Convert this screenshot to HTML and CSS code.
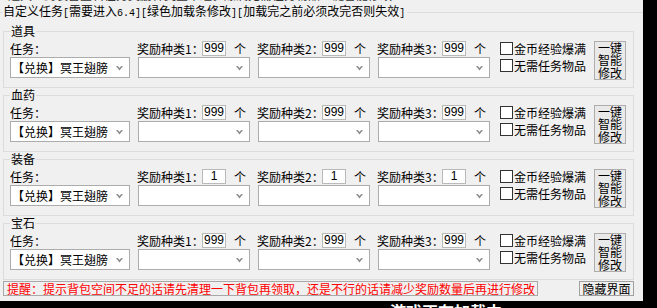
FILE: index.html
```html
<!DOCTYPE html>
<html lang="zh">
<head>
<meta charset="utf-8">
<title>自定义任务</title>
<link rel="stylesheet" href="styles.css">
</head>
<body>
<div class="window">
  <div class="strip"><span>道具血药装备宝石任务奖励种类金币经验爆满无需任务物品一键智能修改</span></div>
  <fieldset class="outer">
    <legend>自定义任务<span class="a">[</span>需要进入<span class="a">6.4]</span><span class="a">[</span>绿色加载条修改<span class="a">]</span><span class="a">[</span>加载完之前必须改完否则失效<span class="a">]</span></legend>

    <fieldset class="group">
      <legend>道具</legend>
      <div class="row">
        <div class="col task">
          <div class="lbl">任务：</div>
          <div class="combo"><span class="txt">【兑换】冥王翅膀</span><svg viewBox="0 0 7 5"><polygon points="0,0 1.8,0 3.5,2 5.2,0 7,0 3.5,4.5" fill="#8a8a8a"/></svg></div>
        </div>
        <div class="col reward">
          <div class="lbl"><span class="name">奖励种类1：</span><span class="num">999</span><span class="ge">个</span></div>
          <div class="combo"><span class="txt"></span><svg viewBox="0 0 7 5"><polygon points="0,0 1.8,0 3.5,2 5.2,0 7,0 3.5,4.5" fill="#8a8a8a"/></svg></div>
        </div>
        <div class="col reward">
          <div class="lbl"><span class="name">奖励种类2：</span><span class="num">999</span><span class="ge">个</span></div>
          <div class="combo"><span class="txt"></span><svg viewBox="0 0 7 5"><polygon points="0,0 1.8,0 3.5,2 5.2,0 7,0 3.5,4.5" fill="#8a8a8a"/></svg></div>
        </div>
        <div class="col reward">
          <div class="lbl"><span class="name">奖励种类3：</span><span class="num">999</span><span class="ge">个</span></div>
          <div class="combo"><span class="txt"></span><svg viewBox="0 0 7 5"><polygon points="0,0 1.8,0 3.5,2 5.2,0 7,0 3.5,4.5" fill="#8a8a8a"/></svg></div>
        </div>
        <div class="checks">
          <div class="chk"><span class="cb"></span>金币经验爆满</div>
          <div class="chk"><span class="cb"></span>无需任务物品</div>
        </div>
        <div class="btn"><span>一键</span><span>智能</span><span>修改</span></div>
      </div>
    </fieldset>

    <fieldset class="group">
      <legend>血药</legend>
      <div class="row">
        <div class="col task">
          <div class="lbl">任务：</div>
          <div class="combo"><span class="txt">【兑换】冥王翅膀</span><svg viewBox="0 0 7 5"><polygon points="0,0 1.8,0 3.5,2 5.2,0 7,0 3.5,4.5" fill="#8a8a8a"/></svg></div>
        </div>
        <div class="col reward">
          <div class="lbl"><span class="name">奖励种类1：</span><span class="num">999</span><span class="ge">个</span></div>
          <div class="combo"><span class="txt"></span><svg viewBox="0 0 7 5"><polygon points="0,0 1.8,0 3.5,2 5.2,0 7,0 3.5,4.5" fill="#8a8a8a"/></svg></div>
        </div>
        <div class="col reward">
          <div class="lbl"><span class="name">奖励种类2：</span><span class="num">999</span><span class="ge">个</span></div>
          <div class="combo"><span class="txt"></span><svg viewBox="0 0 7 5"><polygon points="0,0 1.8,0 3.5,2 5.2,0 7,0 3.5,4.5" fill="#8a8a8a"/></svg></div>
        </div>
        <div class="col reward">
          <div class="lbl"><span class="name">奖励种类3：</span><span class="num">999</span><span class="ge">个</span></div>
          <div class="combo"><span class="txt"></span><svg viewBox="0 0 7 5"><polygon points="0,0 1.8,0 3.5,2 5.2,0 7,0 3.5,4.5" fill="#8a8a8a"/></svg></div>
        </div>
        <div class="checks">
          <div class="chk"><span class="cb"></span>金币经验爆满</div>
          <div class="chk"><span class="cb"></span>无需任务物品</div>
        </div>
        <div class="btn"><span>一键</span><span>智能</span><span>修改</span></div>
      </div>
    </fieldset>

    <fieldset class="group">
      <legend>装备</legend>
      <div class="row">
        <div class="col task">
          <div class="lbl">任务：</div>
          <div class="combo"><span class="txt">【兑换】冥王翅膀</span><svg viewBox="0 0 7 5"><polygon points="0,0 1.8,0 3.5,2 5.2,0 7,0 3.5,4.5" fill="#8a8a8a"/></svg></div>
        </div>
        <div class="col reward">
          <div class="lbl"><span class="name">奖励种类1：</span><span class="num">1</span><span class="ge">个</span></div>
          <div class="combo"><span class="txt"></span><svg viewBox="0 0 7 5"><polygon points="0,0 1.8,0 3.5,2 5.2,0 7,0 3.5,4.5" fill="#8a8a8a"/></svg></div>
        </div>
        <div class="col reward">
          <div class="lbl"><span class="name">奖励种类2：</span><span class="num">1</span><span class="ge">个</span></div>
          <div class="combo"><span class="txt"></span><svg viewBox="0 0 7 5"><polygon points="0,0 1.8,0 3.5,2 5.2,0 7,0 3.5,4.5" fill="#8a8a8a"/></svg></div>
        </div>
        <div class="col reward">
          <div class="lbl"><span class="name">奖励种类3：</span><span class="num">1</span><span class="ge">个</span></div>
          <div class="combo"><span class="txt"></span><svg viewBox="0 0 7 5"><polygon points="0,0 1.8,0 3.5,2 5.2,0 7,0 3.5,4.5" fill="#8a8a8a"/></svg></div>
        </div>
        <div class="checks">
          <div class="chk"><span class="cb"></span>金币经验爆满</div>
          <div class="chk"><span class="cb"></span>无需任务物品</div>
        </div>
        <div class="btn"><span>一键</span><span>智能</span><span>修改</span></div>
      </div>
    </fieldset>

    <fieldset class="group">
      <legend>宝石</legend>
      <div class="row">
        <div class="col task">
          <div class="lbl">任务：</div>
          <div class="combo"><span class="txt">【兑换】冥王翅膀</span><svg viewBox="0 0 7 5"><polygon points="0,0 1.8,0 3.5,2 5.2,0 7,0 3.5,4.5" fill="#8a8a8a"/></svg></div>
        </div>
        <div class="col reward">
          <div class="lbl"><span class="name">奖励种类1：</span><span class="num">999</span><span class="ge">个</span></div>
          <div class="combo"><span class="txt"></span><svg viewBox="0 0 7 5"><polygon points="0,0 1.8,0 3.5,2 5.2,0 7,0 3.5,4.5" fill="#8a8a8a"/></svg></div>
        </div>
        <div class="col reward">
          <div class="lbl"><span class="name">奖励种类2：</span><span class="num">999</span><span class="ge">个</span></div>
          <div class="combo"><span class="txt"></span><svg viewBox="0 0 7 5"><polygon points="0,0 1.8,0 3.5,2 5.2,0 7,0 3.5,4.5" fill="#8a8a8a"/></svg></div>
        </div>
        <div class="col reward">
          <div class="lbl"><span class="name">奖励种类3：</span><span class="num">999</span><span class="ge">个</span></div>
          <div class="combo"><span class="txt"></span><svg viewBox="0 0 7 5"><polygon points="0,0 1.8,0 3.5,2 5.2,0 7,0 3.5,4.5" fill="#8a8a8a"/></svg></div>
        </div>
        <div class="checks">
          <div class="chk"><span class="cb"></span>金币经验爆满</div>
          <div class="chk"><span class="cb"></span>无需任务物品</div>
        </div>
        <div class="btn"><span>一键</span><span>智能</span><span>修改</span></div>
      </div>
    </fieldset>
  </fieldset>

  <div class="bottom">
    <div class="tip">提醒：提示背包空间不足的话请先清理一下背包再领取，还是不行的话请减少奖励数量后再进行修改</div>
    <div class="hide">隐藏界面</div>
  </div>
</div>
<div class="below">游戏正在加载中</div>
</body>
</html>
```

FILE: styles.css
```css
html, body {
  margin: 0;
  padding: 0;
}
body {
  background: #000;
  font-family: "Noto Sans CJK SC", "Noto Sans", sans-serif;
  font-size: 12px;
  color: #000;
  overflow: hidden;
}
.window {
  width: 643px;
  height: 301px;
  background: #f0f0f0;
  overflow: hidden;
}
.strip {
  height: 1px;
  overflow: hidden;
  color: #333;
  padding-left: 8px;
}
.strip span {
  display: block;
  margin-top: -12px;
  line-height: 14px;
  white-space: nowrap;
}
fieldset {
  min-width: 0;
  margin: 0;
}
legend {
  line-height: 14px;
  white-space: nowrap;
}
.outer {
  margin-top: 3px;
  padding: 3px 0 0 2px;
  border: 0;
  border-top: 1px solid #dcdcdc;
}
.outer > legend {
  padding: 0 2px 0 1px;
}
.a {
  font-family: "Liberation Mono", "DejaVu Sans Mono", monospace;
  font-size: 10px;
}
.group {
  margin-left: 1px;
  width: 631px;
  box-sizing: border-box;
  border: 1px solid #dcdcdc;
  padding: 2px 7px 9px 6px;
}
.group > legend {
  padding: 0 1px;
}
.row {
  display: flex;
  height: 38px;
}
.col {
  display: flex;
  flex-direction: column;
}
.task {
  width: 120px;
  margin-right: 8px;
}
.reward {
  width: 112px;
  margin-right: 8px;
}
.lbl {
  height: 17px;
  display: flex;
  align-items: flex-end;
  line-height: 16px;
  white-space: nowrap;
}
.reward .lbl {
  margin-left: -1px;
}
.name {
  width: 65px;
  flex: none;
}
.num {
  flex: none;
  width: 24px;
  height: 15px;
  box-sizing: border-box;
  border: 1px solid #b9b9b9;
  background: #fff;
  font-family: "Liberation Sans", Arial, sans-serif;
  font-size: 12px;
  line-height: 13px;
  text-align: center;
  margin-bottom: 1px;
}
.ge {
  margin-left: 8px;
}
.combo {
  height: 21px;
  box-sizing: border-box;
  border: 1px solid #acacac;
  background: #fff;
  display: flex;
  align-items: center;
  padding: 0 6px 0 1px;
}
.combo .txt {
  flex: 1;
  white-space: nowrap;
  overflow: hidden;
  line-height: 18px;
}
.combo svg {
  width: 7px;
  height: 5px;
  flex: none;
  margin-top: 1px;
}
.checks {
  width: 94px;
  margin-left: 2px;
  padding-top: 2px;
  display: flex;
  flex-direction: column;
  gap: 4px;
}
.chk {
  display: flex;
  align-items: center;
  height: 13px;
  line-height: 13px;
  white-space: nowrap;
}
.cb {
  width: 13px;
  height: 13px;
  box-sizing: border-box;
  border: 1px solid #333;
  background: #fff;
  margin-right: 1px;
  flex: none;
}
.btn {
  flex: none;
  align-self: flex-start;
  width: 32px;
  height: 39px;
  margin-top: 1px;
  box-sizing: border-box;
  border: 1px solid #adadad;
  background: #e9e9e9;
  display: flex;
  flex-direction: column;
  align-items: center;
  padding-top: 0;
  font-size: 12px;
  line-height: 12.3px;
}
.btn span {
  display: block;
  height: 12.3px;
  white-space: nowrap;
}
.bottom {
  display: flex;
  margin-top: 1px;
  padding-left: 3px;
}
.tip {
  width: 535px;
  height: 15px;
  box-sizing: border-box;
  border: 1px solid #a8a8a8;
  color: #ff0000;
  padding-left: 3px;
  line-height: 13px;
  white-space: nowrap;
  overflow: hidden;
}
.hide {
  margin-left: 41px;
  width: 55px;
  height: 15px;
  box-sizing: border-box;
  border: 1px solid #a0a0a0;
  background: #f0f0f0;
  text-align: center;
  line-height: 13px;
  white-space: nowrap;
}
.below {
  margin-left: 390px;
  color: #fff;
  font-size: 16px;
  line-height: 20px;
  font-weight: bold;
  white-space: nowrap;
}
```
